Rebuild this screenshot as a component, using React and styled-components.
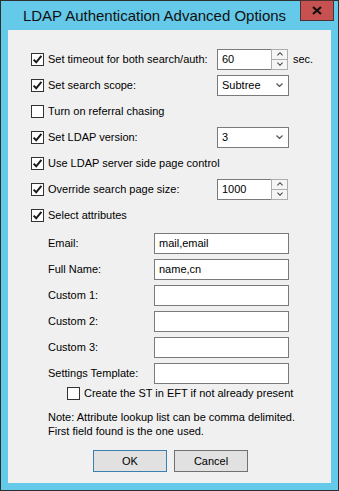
import React from 'react';
import styled, { createGlobalStyle } from 'styled-components';

const GlobalStyle = createGlobalStyle`
  html, body {
    margin: 0;
    padding: 0;
    background: #ffffff;
  }
  * {
    box-sizing: border-box;
  }
`;

const Window = styled.div`
  width: 339px;
  height: 491px;
  border: 1px solid #2f2f2f;
  background: #65c9ea;
  display: flex;
  flex-direction: column;
  font-family: 'Liberation Sans', Arial, sans-serif;
  color: #000;
`;

const TitleBar = styled.div`
  height: 29px;
  display: flex;
  align-items: flex-start;
  padding-left: 8px;
`;

const TitleText = styled.div`
  flex: 1;
  text-align: center;
  font-size: 15px;
  line-height: 29px;
  color: #111;
  white-space: nowrap;
`;

const CloseButton = styled.div`
  width: 34px;
  height: 21px;
  margin-top: -1px;
  margin-right: 4px;
  background: #c75050;
  border: 1px solid #4b3333;
  display: flex;
  align-items: center;
  justify-content: center;
`;

const Client = styled.div`
  margin: 0 7px;
  height: 453px;
  background: #f0f0f0;
  padding: 16px 0 0 23px;
  display: flex;
  flex-direction: column;
  font-size: 11px;
`;

const Section = styled.div`
  display: flex;
  flex-direction: column;
  margin-top: ${({ $top }) => $top || 0}px;
  padding-left: ${({ $indent }) => $indent || 0}px;
`;

const Row = styled.div`
  height: ${({ $h }) => $h || 26}px;
  display: grid;
  grid-template-columns: ${({ $cols }) => $cols || '186px max-content max-content'};
  justify-content: start;
  align-items: center;
`;

const CheckWrap = styled.div`
  display: flex;
  align-items: center;
  gap: 4px;
  white-space: nowrap;
`;

const Box = styled.span`
  width: 13px;
  height: 13px;
  border: 1px solid #333;
  background: #fff;
  display: inline-flex;
  align-items: center;
  justify-content: center;
  flex-shrink: 0;
`;

const Label = styled.span`
  white-space: nowrap;
`;

const Edit = styled.input`
  width: ${({ $w }) => $w}px;
  height: 21px;
  border: 1px solid #7a7a7a;
  background: #fff;
  font: 11px 'Liberation Sans', Arial, sans-serif;
  color: #000;
  padding: 0 4px;
  outline: none;
  margin: 0;
`;

const Spin = styled.div`
  display: flex;
  width: 71px;
  height: 21px;
`;

const SpinEdit = styled(Edit)`
  width: 54px;
  border-right: none;
`;

const SpinButtons = styled.div`
  width: 17px;
  height: 21px;
  display: flex;
  flex-direction: column;
  border: 1px solid #adadad;
  background: #f0f0f0;
`;

const SpinHalf = styled.div`
  flex: 1;
  display: flex;
  align-items: center;
  justify-content: center;
  border-top: ${({ $bottom }) => ($bottom ? '1px solid #adadad' : 'none')};
  background: #f5f5f5;
`;

const Unit = styled.span`
  margin-left: 5px;
`;

const Select = styled.div`
  width: 72px;
  height: 21px;
  border: 1px solid #7a7a7a;
  background: #fff;
  display: flex;
  align-items: center;
  justify-content: space-between;
  padding: 0 5px 0 4px;
`;

const Note = styled.div`
  margin-top: 10px;
  padding-left: 17px;
  line-height: 14px;
`;

const Buttons = styled.div`
  margin-top: 12px;
  margin-left: -23px;
  padding-left: 2px;
  display: flex;
  justify-content: center;
  gap: 7px;
`;

const Button = styled.div`
  width: 74px;
  height: 22px;
  background: #e1e1e1;
  border: 1px solid ${({ $default }) => ($default ? '#3c7fb1' : '#707070')};
  display: flex;
  align-items: center;
  justify-content: center;
`;

const Check = ({ checked }) => (
  <Box>
    {checked && (
      <svg width="11" height="11" viewBox="0 0 11 11">
        <path d="M1.6 5.6 L4.2 8.3 L9.4 1.8" fill="none" stroke="#1a1a1a" strokeWidth="2" />
      </svg>
    )}
  </Box>
);

const CheckItem = ({ checked, children }) => (
  <CheckWrap>
    <Check checked={checked} />
    <Label>{children}</Label>
  </CheckWrap>
);

const Chevron = ({ up, color = '#404040', w = 7, h = 4 }) => (
  <svg width={w} height={h} viewBox="0 0 7 4">
    <path
      d={up ? 'M0.5 3.5 L3.5 0.5 L6.5 3.5' : 'M0.5 0.5 L3.5 3.5 L6.5 0.5'}
      fill="none"
      stroke={color}
      strokeWidth="1.2"
    />
  </svg>
);

const SpinBox = ({ value }) => (
  <Spin>
    <SpinEdit readOnly defaultValue={value} />
    <SpinButtons>
      <SpinHalf>
        <Chevron up w={6} h={4} />
      </SpinHalf>
      <SpinHalf $bottom>
        <Chevron w={6} h={4} />
      </SpinHalf>
    </SpinButtons>
  </Spin>
);

const Combo = ({ value }) => (
  <Select>
    <span>{value}</span>
    <Chevron color="#555" />
  </Select>
);

const attributes = [
  ['Email:', 'mail,email'],
  ['Full Name:', 'name,cn'],
  ['Custom 1:', ''],
  ['Custom 2:', ''],
  ['Custom 3:', ''],
  ['Settings Template:', ''],
];

export default function App() {
  return (
    <>
      <GlobalStyle />
      <Window>
        <TitleBar>
          <TitleText>LDAP Authentication Advanced Options</TitleText>
          <CloseButton>
            <svg width="10" height="9" viewBox="0 0 10 9">
              <path d="M1 1 L9 8 M9 1 L1 8" stroke="#111" strokeWidth="2.2" />
            </svg>
          </CloseButton>
        </TitleBar>
        <Client>
          <Section>
            <Row>
              <CheckItem checked>Set timeout for both search/auth:</CheckItem>
              <SpinBox value="60" />
              <Unit>sec.</Unit>
            </Row>
            <Row>
              <CheckItem checked>Set search scope:</CheckItem>
              <Combo value="Subtree" />
            </Row>
            <Row>
              <CheckItem>Turn on referral chasing</CheckItem>
            </Row>
            <Row>
              <CheckItem checked>Set LDAP version:</CheckItem>
              <Combo value="3" />
            </Row>
            <Row>
              <CheckItem checked>Use LDAP server side page control</CheckItem>
            </Row>
            <Row>
              <CheckItem checked>Override search page size:</CheckItem>
              <SpinBox value="1000" />
            </Row>
            <Row>
              <CheckItem checked>Select attributes</CheckItem>
            </Row>
          </Section>
          <Section $top={2} $indent={17}>
            {attributes.map(([label, value]) => (
              <Row key={label} $cols="106px max-content">
                <Label>{label}</Label>
                <Edit $w={135} readOnly defaultValue={value} />
              </Row>
            ))}
          </Section>
          <Section $indent={36}>
            <Row $h={14} $cols="max-content">
              <CheckItem>Create the ST in EFT if not already present</CheckItem>
            </Row>
          </Section>
          <Note>
            Note: Attribute lookup list can be comma delimited.
            <br />
            First field found is the one used.
          </Note>
          <Buttons>
            <Button $default>OK</Button>
            <Button>Cancel</Button>
          </Buttons>
        </Client>
      </Window>
    </>
  );
}
